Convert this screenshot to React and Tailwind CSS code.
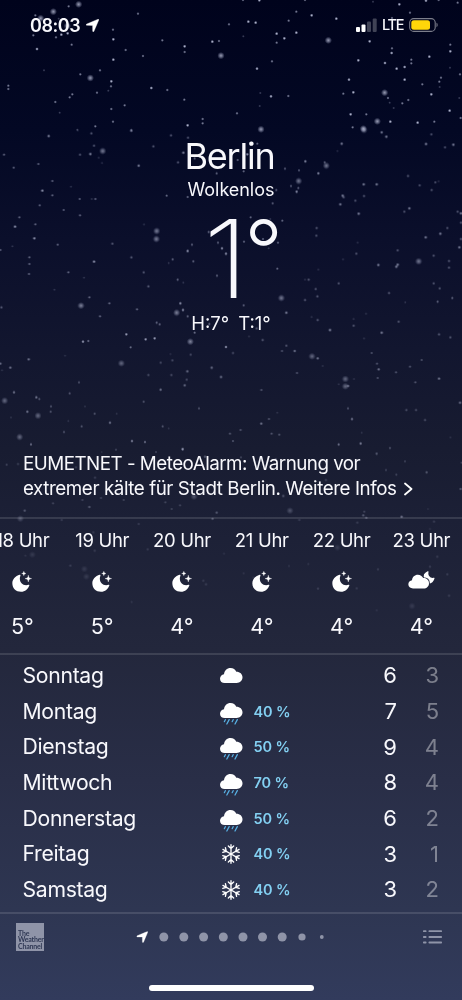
import React from "react";

// [x, y, kind] - 1 faint, 2 normal, 3 bright, 4 large and soft
const starFields = [
  {
    transform: "translate(0 0) scale(0.3333)",
    opacity: 1,
    stars: [
      [236, 13, 4], [160, 35, 4], [206, 19, 2], [122, 55, 4], [106, 46, 2], [176, 56, 1], [202, 78, 4], [100, 106, 2], [168, 112, 2],
      [184, 104, 3], [203, 100, 3], [215, 134, 2], [111, 147, 3], [132, 211, 1], [25, 257, 2], [25, 267, 2], [241, 223, 2], [271, 234, 4],
      [300, 211, 2], [334, 244, 3], [333, 259, 2], [325, 272, 1], [291, 278, 2], [217, 283, 2], [209, 292, 2], [166, 306, 2], [179, 338, 1],
      [334, 327, 2], [374, 316, 2], [339, 365, 2], [286, 379, 2], [414, 41, 2], [339, 89, 2], [340, 118, 3], [377, 150, 2], [340, 179, 3],
      [429, 168, 2], [487, 121, 2], [554, 139, 3], [554, 156, 2], [637, 125, 3], [657, 123, 2], [663, 167, 4], [687, 73, 2], [454, 264, 3],
      [502, 270, 2], [553, 299, 2], [608, 357, 2], [608, 370, 2], [563, 376, 3], [232, 389, 1], [394, 389, 1],
    ],
  },
  {
    transform: "translate(231 0) scale(0.3333)",
    opacity: 1,
    stars: [
      [85, 1, 3], [222, 0, 2], [196, 35, 2], [242, 46, 3], [173, 62, 2], [52, 65, 3], [74, 68, 3], [37, 109, 1], [137, 101, 3], [137, 128, 2],
      [160, 115, 3], [196, 98, 3], [292, 121, 4], [316, 56, 3], [78, 206, 3], [123, 184, 2], [426, 5, 1], [505, 13, 3], [585, 2, 3],
      [680, 8, 2], [537, 38, 2], [483, 54, 2], [416, 124, 3], [483, 145, 2], [482, 159, 3], [382, 181, 3], [462, 189, 3], [497, 206, 3],
      [521, 201, 3], [541, 179, 2], [541, 190, 2], [595, 170, 3], [658, 134, 2], [658, 154, 3], [657, 203, 1], [687, 223, 2], [630, 233, 2],
      [625, 245, 2], [626, 261, 1], [574, 253, 2], [521, 239, 3], [354, 239, 3], [337, 281, 2], [367, 277, 3], [461, 278, 4], [471, 294, 2],
      [476, 308, 1], [488, 324, 1], [514, 310, 2], [532, 300, 2], [601, 283, 3], [656, 332, 3], [685, 294, 1], [88, 279, 1], [120, 289, 3],
      [172, 288, 2], [86, 318, 1], [18, 340, 2], [359, 343, 3], [406, 343, 2], [439, 364, 4], [397, 386, 4], [365, 382, 2], [478, 365, 3],
      [560, 368, 3], [610, 365, 2], [90, 388, 4], [689, 354, 2], [36, 0, 2], [623, 0, 2],
    ],
  },
  {
    transform: "translate(0 130) scale(0.3333)",
    opacity: 0.82,
    stars: [
      [146, 18, 3], [233, 1, 1], [274, 10, 2], [394, 2, 3], [282, 47, 2], [308, 63, 4], [240, 74, 2], [271, 72, 3], [296, 83, 1], [306, 99, 1],
      [12, 74, 2], [41, 113, 2], [115, 102, 2], [157, 153, 2], [127, 182, 3], [157, 196, 2], [213, 170, 1], [239, 207, 2], [275, 207, 1],
      [286, 207, 2], [119, 226, 2], [191, 240, 2], [240, 256, 2], [58, 262, 2], [106, 283, 2], [45, 290, 3], [103, 325, 3], [37, 349, 1],
      [1, 360, 2], [173, 344, 2], [88, 382, 2], [88, 402, 2], [87, 432, 2], [282, 395, 3], [205, 427, 2], [252, 443, 1], [337, 341, 2],
      [394, 382, 2], [432, 283, 1], [470, 303, 4], [469, 327, 4], [431, 427, 2], [445, 469, 2], [460, 49, 2], [513, 16, 2], [416, 107, 3],
      [534, 97, 2], [550, 68, 3], [564, 23, 2], [500, 197, 2], [563, 201, 2], [650, 130, 2], [584, 85, 2], [675, 190, 2], [626, 306, 2],
      [654, 338, 2], [666, 355, 3], [678, 371, 3], [576, 344, 2], [563, 363, 3], [580, 394, 2], [518, 388, 2], [506, 399, 1], [651, 437, 2],
      [533, 449, 2], [550, 458, 1], [163, 479, 1], [268, 502, 2], [243, 527, 4], [328, 520, 2], [300, 559, 2], [411, 538, 2], [541, 520, 3],
      [530, 548, 4], [549, 540, 3], [563, 559, 2], [4, 532, 2], [470, 578, 2], [479, 583, 2], [379, 613, 3], [249, 635, 3], [265, 633, 2],
      [437, 628, 3], [464, 625, 3], [571, 635, 4], [584, 608, 2], [678, 651, 3], [628, 582, 2], [392, 652, 2],
    ],
  },
  {
    transform: "translate(231 130) scale(0.3333)",
    opacity: 0.78,
    stars: [
      [399, 0, 4], [452, 7, 3], [466, 20, 3], [601, 13, 2], [585, 42, 3], [642, 52, 2], [667, 44, 3], [332, 41, 3], [319, 63, 1], [223, 94, 3],
      [281, 97, 2], [286, 107, 4], [162, 116, 2], [204, 121, 2], [262, 130, 3], [203, 153, 4], [180, 168, 2], [202, 174, 2], [197, 185, 3],
      [136, 180, 2], [125, 220, 2], [79, 41, 2], [49, 73, 3], [38, 124, 2], [20, 90, 2], [59, 262, 2], [118, 267, 1], [154, 272, 2],
      [39, 335, 2], [96, 327, 2], [141, 338, 2], [113, 355, 1], [139, 416, 2], [257, 294, 2], [256, 317, 2], [398, 163, 3], [437, 163, 3],
      [531, 138, 2], [566, 166, 2], [613, 157, 2], [623, 154, 1], [602, 180, 2], [335, 197, 3], [338, 202, 2], [399, 198, 2], [373, 212, 2],
      [328, 223, 3], [383, 251, 3], [520, 245, 2], [535, 235, 3], [680, 245, 2], [690, 250, 3], [690, 278, 2], [649, 294, 2], [628, 311, 3],
      [584, 322, 3], [690, 327, 2], [685, 352, 3], [380, 338, 1], [376, 371, 2], [336, 388, 1], [500, 361, 2], [563, 394, 4], [608, 377, 2],
      [654, 393, 2], [654, 413, 2], [500, 404, 3], [496, 410, 3], [442, 405, 3], [262, 419, 1], [222, 449, 1], [233, 449, 2], [323, 460, 2],
      [254, 477, 2], [259, 499, 2], [222, 510, 2], [151, 504, 4], [38, 526, 2], [474, 489, 2], [523, 517, 1], [608, 460, 2], [626, 475, 2],
      [620, 515, 2], [664, 504, 2], [166, 548, 3], [260, 570, 2], [242, 561, 1], [368, 567, 1], [368, 587, 2], [405, 551, 1], [297, 600, 3],
      [503, 575, 2], [452, 608, 3], [399, 625, 1], [624, 613, 2], [658, 622, 2], [54, 619, 1], [95, 630, 2], [166, 647, 2], [77, 595, 2],
    ],
  },
  {
    transform: "translate(0 330) scale(0.3333)",
    opacity: 0.62,
    stars: [
      [1, 101, 3], [31, 113, 3], [86, 88, 3], [195, 77, 1], [6, 121, 1], [364, 100, 4], [237, 157, 2], [42, 187, 3], [14, 212, 4],
      [109, 202, 3], [118, 207, 2], [209, 190, 2], [153, 229, 2], [152, 245, 2], [82, 245, 3], [114, 257, 4], [33, 262, 1], [255, 229, 1],
      [284, 251, 2], [205, 273, 1], [245, 289, 2], [330, 278, 3], [350, 251, 1], [192, 306, 2], [59, 321, 4], [93, 343, 2], [396, 333, 2],
      [435, 336, 2], [431, 215, 2], [482, 179, 3], [445, 135, 2], [482, 98, 2], [511, 72, 1], [517, 91, 2], [514, 135, 2], [562, 124, 3],
      [560, 149, 2], [554, 166, 3], [572, 74, 2], [635, 113, 3], [663, 141, 3], [699, 69, 2], [597, 235, 2], [784, 180, 2], [488, 289, 2],
      [506, 295, 1], [548, 357, 3], [690, 311, 2], [722, 300, 2], [699, 333, 1], [784, 281, 3], [807, 267, 2], [832, 248, 1], [815, 311, 2],
      [838, 314, 2], [846, 63, 2], [884, 63, 3], [936, 79, 4], [953, 85, 3], [968, 108, 1], [891, 129, 2], [1036, 147, 4], [1036, 169, 4],
      [1044, 168, 3], [1062, 147, 1], [1016, 163, 1], [1044, 235, 2], [1056, 267, 3], [1085, 308, 1], [1082, 341, 2], [1016, 343, 2],
      [1115, 69, 2], [1131, 101, 2], [1136, 118, 3], [1133, 144, 2], [1188, 127, 2], [1230, 110, 2], [1265, 90, 2], [1246, 157, 2],
      [1317, 146, 3], [1380, 218, 3], [1219, 240, 2], [1248, 240, 2], [1275, 270, 2], [1351, 322, 1], [1170, 354, 1],
    ],
  },
  {
    transform: "translate(0 440) scale(0.3333)",
    opacity: 0.42,
    stars: [
      [20, 74, 2], [93, 13, 2], [348, 29, 2], [396, 3, 3], [435, 6, 2], [468, 36, 2], [548, 28, 3], [699, 3, 2], [305, 36, 1], [228, 82, 2],
      [54, 72, 2], [285, 113, 2], [159, 190, 2], [268, 201, 3], [74, 212, 3], [61, 236, 4], [303, 174, 2], [247, 180, 2], [371, 180, 2],
      [496, 187, 2], [515, 207, 2], [540, 196, 2], [582, 170, 4], [650, 218, 3], [638, 236, 2], [870, 212, 4], [1093, 215, 2], [1090, 226, 3],
      [1100, 234, 2], [1205, 230, 3], [1016, 14, 2], [1082, 10, 3], [1130, 41, 3], [1170, 24, 2], [1215, 64, 2], [1158, 90, 2], [1189, 104, 2],
      [1280, 97, 3], [1284, 207, 1], [1382, 147, 3], [1385, 68, 2], [850, 168, 3], [978, 120, 2], [723, 52, 2], [615, 50, 3], [827, 58, 3],
    ],
  },
  {
    transform: "translate(0 515) scale(0.3333)",
    opacity: 0.2,
    stars: [
      [185, 15, 3], [416, 27, 3], [637, 12, 3], [97, 119, 4], [76, 122, 2], [211, 152, 3], [253, 162, 4], [259, 185, 4], [443, 103, 3],
      [672, 116, 2], [610, 197, 3], [618, 208, 3], [395, 261, 2], [284, 107, 3], [280, 52, 3], [898, 15, 3], [1072, 23, 3], [1098, 8, 3],
      [1205, 6, 3], [1302, 20, 3], [1290, 42, 2], [1012, 98, 4], [867, 153, 2], [925, 147, 2], [731, 175, 2], [1134, 163, 3], [1290, 155, 3],
      [1312, 125, 3], [1342, 178, 3], [1347, 242, 3], [1236, 273, 4], [1130, 286, 2], [954, 221, 3], [1070, 220, 3], [760, 188, 2],
    ],
  },
];

const starKinds = {
  1: { r: 4.5, opacity: 0.3 },
  2: { r: 5, opacity: 0.62 },
  3: { r: 5.5, opacity: 0.92 },
  4: { r: 11, opacity: 0.7 },
};

const hours = [
  { time: "18 Uhr", icon: "moon", temp: "5°" },
  { time: "19 Uhr", icon: "moon", temp: "5°" },
  { time: "20 Uhr", icon: "moon", temp: "4°" },
  { time: "21 Uhr", icon: "moon", temp: "4°" },
  { time: "22 Uhr", icon: "moon", temp: "4°" },
  { time: "23 Uhr", icon: "cloudMoon", temp: "4°" },
];

const days = [
  { name: "Sonntag", icon: "cloud", rain: "", high: 6, low: 3 },
  { name: "Montag", icon: "rain", rain: "40 %", high: 7, low: 5 },
  { name: "Dienstag", icon: "rain", rain: "50 %", high: 9, low: 4 },
  { name: "Mittwoch", icon: "rain", rain: "70 %", high: 8, low: 4 },
  { name: "Donnerstag", icon: "rain", rain: "50 %", high: 6, low: 2 },
  { name: "Freitag", icon: "snow", rain: "40 %", high: 3, low: 1 },
  { name: "Samstag", icon: "snow", rain: "40 %", high: 3, low: 2 },
];

const CLOUD = "M14 45 C6 45 0 40 0 32 C0 25 5 20 12 18.500 C13 8 21 0 31.500 0 C40 0 46 4.500 49 11 C60 11 67.500 18 67.500 28 C67.500 38 60 45 50 45 Z";

function Stars() {
  return (
    <svg className="absolute inset-0" width="462" height="1000" viewBox="0 0 462 1000">
      <defs>
        <radialGradient id="glow">
          <stop offset="0" stopColor="#d3d7ec" />
          <stop offset="0.4" stopColor="#c3c8e2" stopOpacity="0.7" />
          <stop offset="1" stopColor="#b0b6d6" stopOpacity="0" />
        </radialGradient>
      </defs>
      {starFields.map((field) => (
        <g key={field.transform} transform={field.transform} opacity={field.opacity}>
          {field.stars.map(([x, y, kind], i) => (
            <circle key={i} cx={x} cy={y} r={starKinds[kind].r} opacity={starKinds[kind].opacity} fill="url(#glow)" />
          ))}
        </g>
      ))}
    </svg>
  );
}

function LocationArrow({ size }) {
  return (
    <svg width={size} height={size} viewBox="0 0 36 36" fill="white">
      <path d="M33.500 0.600 C35 0 36 1 35.400 2.500 L22 34 C21 36.300 18.500 36 18.500 33.500 L18.300 19 C18.300 18 18 17.700 17 17.700 L2.500 17.500 C0 17.500 -0.400 15 2 14 Z" stroke="white" strokeWidth="1" />
    </svg>
  );
}

function MoonIcon() {
  return (
    <svg width="20" height="21" viewBox="0 0 60 63" fill="white">
      <path d="M23 11.500 C25 10.600 26 12 25.200 14 C24 17 23.500 19.500 23.500 22.500 C23.500 34.500 31 42.500 42.500 42.500 C45.500 42.500 47.500 42 49.500 41.300 C51.600 40.600 52.700 41.700 52 43.500 C48 54.500 39.500 62.500 27 62.500 C12 62.500 1 52 1 37 C1 25 10 15.500 23 11.500 Z" />
      <path d="M35.500 1 C36.500 5.500 37.500 6.500 42 7.500 C37.500 8.500 36.500 9.500 35.500 14 C34.500 9.500 33.500 8.500 29 7.500 C33.500 6.500 34.500 5.500 35.500 1 Z" stroke="white" strokeWidth="1" />
      <path d="M49 12.500 C50.300 20 51.500 21.200 59 22.800 C51.500 24.400 50.300 25.600 49 33 C47.700 25.600 46.500 24.400 39 22.800 C46.500 21.200 47.700 20 49 12.500 Z" stroke="white" strokeWidth="1" />
    </svg>
  );
}

function CloudMoonIcon() {
  return (
    <svg className="mt-[-2px]" width="27" height="18" viewBox="0 0 81 54" fill="white">
      <path d="M59 1 C61 0 62 1 61.500 3 C59 13 66 22 77 20.500 C79 20.200 80 21.200 79.300 23 C77 31 71 37 62 38.500 L46 25 L48 10 C51 6 55 3 59 1 Z" />
      <path
        d="M15 52.500 C7 52.500 1 47.500 1 40 C1 33 6 28.500 12 27.500 C13 18 20 11 29.500 11 C37 11 42.500 15 45.500 21 C56 21 63 27 63 36.500 C63 46 56 52.500 47 52.500 Z"
        stroke="#1f2439"
        strokeWidth="5"
        paintOrder="stroke"
      />
    </svg>
  );
}

function CloudIcon() {
  return (
    <svg className="mt-[-1px]" width="23" height="15" viewBox="0 0 69 45" fill="white">
      <path d={CLOUD} />
    </svg>
  );
}

function RainIcon() {
  return (
    <svg className="mt-[4px]" width="23" height="22" viewBox="0 0 69 66">
      <path d={CLOUD} fill="white" />
      <path d="M16 50 L13 56 M27.500 50 L20.500 63 M39.500 50 L36.500 56 M52 50 L45 63" stroke="#58b0e3" strokeWidth="3.800" strokeLinecap="round" />
    </svg>
  );
}

function SnowIcon() {
  return (
    <svg width="20" height="20" viewBox="-30 -30 60 60" fill="none" stroke="white" strokeWidth="4" strokeLinecap="round" strokeLinejoin="round">
      {[0, 60, 120, 180, 240, 300].map((angle) => (
        <path key={angle} transform={`rotate(${angle})`} d="M0 0 V-28 M-8 -24 L0 -16.500 L8 -24" />
      ))}
    </svg>
  );
}

const icons = {
  moon: MoonIcon,
  cloudMoon: CloudMoonIcon,
  cloud: CloudIcon,
  rain: RainIcon,
  snow: SnowIcon,
};

function StatusBar() {
  return (
    <div className="flex h-[50px] items-center justify-between pl-[30px] pr-[24px]">
      <div className="flex items-center gap-[5.500px]">
        <span className="w-[50px] whitespace-nowrap text-[18px] font-[560] tracking-[-0.45px]">08:03</span>
        <LocationArrow size={13} />
      </div>
      <div className="flex items-center">
        <svg width="21" height="14" viewBox="0 0 21 14" fill="white">
          <rect x="0" y="9" width="4" height="5" rx="1" />
          <rect x="5.500" y="6.500" width="4" height="7.500" rx="1" />
          <rect x="11" y="3.500" width="4" height="10.500" rx="1" opacity="0.25" />
          <rect x="16.700" y="0.500" width="4" height="13.500" rx="1" opacity="0.25" />
        </svg>
        <span className="ml-[5px] w-[21px] whitespace-nowrap text-[14.500px] font-medium tracking-[-1.300px]">LTE</span>
        <svg className="ml-[6px]" width="29" height="14" viewBox="0 0 29 14">
          <rect x="0.700" y="0.600" width="25.500" height="12.800" rx="4" fill="none" stroke="#7c7e8b" strokeWidth="1.100" />
          <rect x="2.300" y="2.200" width="18.700" height="9.600" rx="2.500" fill="#ffd60a" />
          <path d="M27.500 4.800 C29 5.300 29 8.700 27.500 9.200 Z" fill="#7c7e8b" />
        </svg>
      </div>
    </div>
  );
}

function Current() {
  return (
    <div className="flex h-[402px] flex-col items-center pt-[83px]">
      <h1 className="h-[46px] pr-[3px] text-[36px] leading-[46px] tracking-[-1.200px]">Berlin</h1>
      <p className="mt-[-1px] h-[24px] text-[18px] leading-[24px] tracking-[-0.050px]">Wolkenlos</p>
      <div className="flex h-[108px] w-[80px] justify-between pt-[3px]">
        <span className="ml-[12px] origin-left scale-x-[1.12] text-[108px] leading-[108px] font-[240]">1</span>
        <span className="mr-[-12px] text-[85px] leading-[92px] font-[340]">°</span>
      </div>
      <p className="mt-[1px] flex gap-[9px] text-[18.500px] leading-[24px]">
        <span>H:7°</span>
        <span>T:1°</span>
      </p>
    </div>
  );
}

function Alert() {
  return (
    <div className="h-[65px] px-[23px] text-[18.800px] leading-[24.500px]">
      <p className="tracking-[-0.510px] whitespace-nowrap">EUMETNET - MeteoAlarm: Warnung vor</p>
      <div className="flex items-center gap-2">
        <p className="tracking-[-0.430px] whitespace-nowrap">extremer kälte für Stadt Berlin. Weitere Infos</p>
        <svg width="9" height="14" viewBox="0 0 9 14" fill="none" stroke="white" strokeWidth="1.800" strokeLinecap="round" strokeLinejoin="round">
          <path d="M1 1.500 L7.500 7 L1 12.500" />
        </svg>
      </div>
    </div>
  );
}

function Hourly() {
  return (
    <div className="flex h-[135.500px] border-t-2 border-white/12">
      <div className="ml-[-17.500px] flex shrink-0">
        {hours.map((hour) => {
          const Icon = icons[hour.icon];
          return (
            <div key={hour.time} className="flex w-[79.800px] shrink-0 flex-col items-center pt-[8.500px]">
              <span className="text-[18.500px] leading-[24px] tracking-[-0.3px] whitespace-nowrap">{hour.time}</span>
              <div className="flex h-[59px] items-center justify-center">
                <Icon />
              </div>
              <span className="text-[21.500px] leading-[31px]">{hour.temp}</span>
            </div>
          );
        })}
      </div>
    </div>
  );
}

function Daily() {
  return (
    <div className="h-[259.500px] border-t-2 border-white/12 pt-[3.500px]">
      {days.map((day) => {
        const Icon = icons[day.icon];
        return (
          <div key={day.name} className="flex h-[35.700px] items-center pl-[22.500px] pr-[23px]">
            <span className="w-[195px] text-[21.200px] tracking-[-0.3px]">{day.name}</span>
            <div className="flex w-[27px] justify-center">
              <Icon />
            </div>
            <span className="ml-[9px] text-[14.500px] font-semibold tracking-[-0.1px] text-[#83d0f2]">{day.rain}</span>
            <span className="ml-auto text-[22px]">{day.high}</span>
            <span className="w-[42px] text-right text-[22px] text-white/40">{day.low}</span>
          </div>
        );
      })}
    </div>
  );
}

function Footer() {
  return (
    <div className="relative h-[88px] border-t-2 border-white/12">
      <div className="flex h-[45px] items-center pl-[16px]">
        <div className="mt-[1px] flex h-[28px] w-[28px] flex-col justify-end bg-[#8f94a8] pb-[2px] pl-[2px] font-['Lato',sans-serif] text-[7px] leading-[6.300px] font-bold tracking-[-0.2px] text-[#303955]">
          <span>The</span>
          <span>Weather</span>
          <span>Channel</span>
        </div>
        <svg className="ml-[90.500px]" width="190" height="14" viewBox="0 0 190 14" fill="#8f94a8">
          <g transform="translate(1.500 1.300)">
            <LocationArrow size={11.5} />
          </g>
          {[28.8, 48.8, 68.6, 88.3, 108, 127.5, 147.2].map((x) => (
            <circle key={x} cx={x} cy="7" r="4.500" />
          ))}
          <circle cx="167" cy="7" r="3.600" />
          <circle cx="186.800" cy="7" r="1.900" />
        </svg>
        <svg className="ml-[98.500px]" width="19" height="14" viewBox="0 0 19 14" fill="#8f94a8">
          {[0.2, 6, 11.6].map((y) => (
            <g key={y}>
              <rect x="0" y={y} width="3.500" height="1.900" rx="0.700" />
              <rect x="5.500" y={y} width="13.500" height="1.900" rx="0.700" />
            </g>
          ))}
        </svg>
      </div>
      <div className="mx-auto mt-[26px] h-[6px] w-[165px] rounded-full bg-white" />
    </div>
  );
}

export default function App() {
  return (
    <div className="relative h-[1000px] w-[462px] overflow-hidden bg-[linear-gradient(#00031c_0%,#030824_13%,#0b0f2b_24%,#12162f_35%,#181c31_45%,#1c2036_52%,#23273c_65%,#292e47_78%,#2e3652_91%,#323b5c_100%)] font-['Inter','Liberation_Sans',sans-serif] text-[#f8f8fc]">
      <Stars />
      <div className="relative">
        <StatusBar />
        <Current />
        <Alert />
        <Hourly />
        <Daily />
        <Footer />
      </div>
    </div>
  );
}
